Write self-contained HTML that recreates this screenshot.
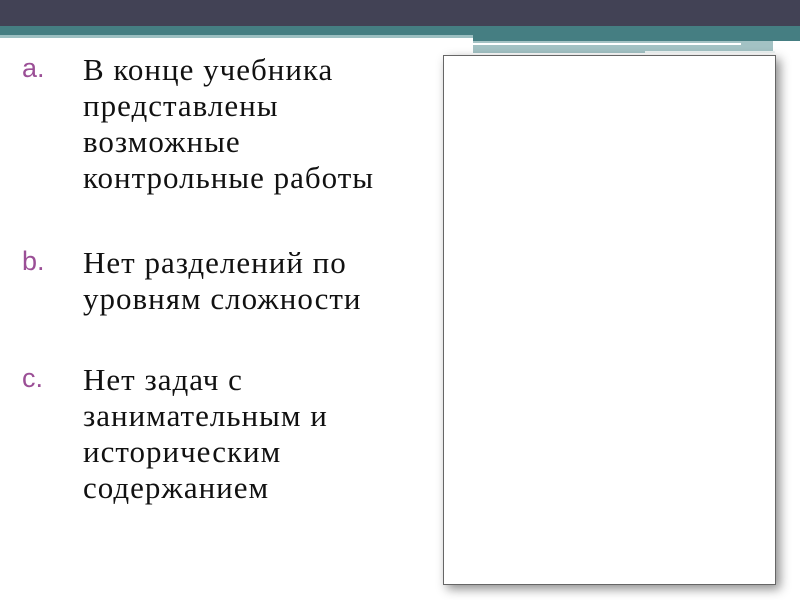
<!DOCTYPE html>
<html><head><meta charset="utf-8"><style>
html,body{margin:0;padding:0;width:800px;height:600px;overflow:hidden;background:#fff;position:relative}
.d{position:absolute;left:0;top:0;width:800px;height:26px;background:#424255}
.t{position:absolute;left:0;top:26px;width:800px;height:11px;background:#457e82}
.t2{position:absolute;left:0;top:35px;width:473px;height:3px;background:#9cbfc1}
.t3{position:absolute;left:473px;top:37px;width:327px;height:4px;background:#457e82}
.t4{position:absolute;left:473px;top:41px;width:300px;height:12px;background:#a3c2c4}
.w1{position:absolute;left:473px;top:43px;width:268px;height:2px;background:#fff}
.w2{position:absolute;left:645px;top:51px;width:130px;height:2px;background:#eef4f4}
.box{position:absolute;left:443px;top:55px;width:331px;height:528px;background:#fff;border:1px solid #666;box-shadow:4px 4px 10px rgba(0,0,0,.45)}
.l{position:absolute;font-family:"Liberation Serif",serif;font-size:31px;letter-spacing:1px;color:#111;line-height:36px;left:83px;white-space:nowrap}
.m{position:absolute;font-family:"Liberation Sans",sans-serif;font-size:27px;color:#9b4f96;left:22px}
</style></head><body>
<div class="d"></div><div class="t"></div><div class="t2"></div><div class="t3"></div><div class="t4"></div><div class="w1"></div><div class="w2"></div>
<div class="box"></div>
<div class="m" style="top:53px">a.</div>
<div class="l" style="top:52px">В конце учебника<br>представлены<br>возможные<br>контрольные работы</div>
<div class="m" style="top:246px">b.</div>
<div class="l" style="top:245px">Нет разделений по<br>уровням сложности</div>
<div class="m" style="top:363px">c.</div>
<div class="l" style="top:362px">Нет задач с<br>занимательным и<br>историческим<br>содержанием</div>
</body></html>
